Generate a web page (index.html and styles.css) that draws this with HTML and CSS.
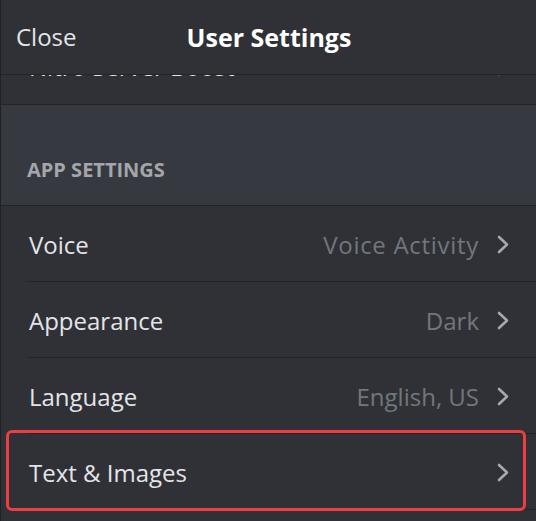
FILE: index.html
```html
<!DOCTYPE html>
<html lang="en">
<head>
<meta charset="utf-8">
<title>User Settings</title>
<link rel="stylesheet" href="styles.css">
</head>
<body>
<div class="screen">
  <header class="topbar">
    <span class="close">Close</span>
    <h1 class="title">User Settings</h1>
  </header>
  <div class="scroll">
    <div class="row row-full">
      <span class="label">Nitro Server Boost</span>
      <span class="trail">
        <svg class="chev" viewBox="0 0 12 19" width="12" height="19"><polyline points="2,2 10,9.5 2,17"/></svg>
      </span>
    </div>
    <div class="section-head">APP SETTINGS</div>
    <div class="group">
      <div class="row">
        <span class="label">Voice</span>
        <span class="trail"><span class="value value-wide">Voice Activity</span>
          <svg class="chev" viewBox="0 0 12 19" width="12" height="19"><polyline points="2,2 10,9.5 2,17"/></svg></span>
      </div>
      <div class="row">
        <span class="label">Appearance</span>
        <span class="trail"><span class="value">Dark</span>
          <svg class="chev" viewBox="0 0 12 19" width="12" height="19"><polyline points="2,2 10,9.5 2,17"/></svg></span>
      </div>
      <div class="row">
        <span class="label">Language</span>
        <span class="trail"><span class="value">English, US</span>
          <svg class="chev" viewBox="0 0 12 19" width="12" height="19"><polyline points="2,2 10,9.5 2,17"/></svg></span>
      </div>
      <div class="row row-highlight">
        <span class="label">Text &amp; Images</span>
        <span class="trail">
          <svg class="chev" viewBox="0 0 12 19" width="12" height="19"><polyline points="2,2 10,9.5 2,17"/></svg></span>
      </div>
    </div>
  </div>
</div>
</body>
</html>
```

FILE: styles.css
```css
* { box-sizing: border-box; }
html, body {
  margin: 0;
  padding: 0;
  background: #2f3136;
  height: 100%;
  overflow: hidden;
}
body {
  font-family: "Open Sans", "Noto Sans", sans-serif;
  color: #dcddde;
}
.screen {
  position: relative;
  height: 521px;
  border-left: 1px solid #1f2124;
  overflow: hidden;
}
.topbar {
  position: absolute;
  top: 0;
  left: 0;
  right: 0;
  height: 75px;
  background: #2f3136;
  border-bottom: 1px solid #222427;
  z-index: 2;
  display: flex;
  align-items: center;
  justify-content: center;
}
.close {
  position: absolute;
  left: 15px;
  top: 0;
  line-height: 74px;
  font-size: 24px;
  color: #e3e5e8;
}
.title {
  margin: 0;
  font-size: 25px;
  font-weight: 700;
  color: #ffffff;
  line-height: 74px;
  padding-left: 1px;
}
.scroll {
  padding-top: 29px;
}
.row {
  display: flex;
  align-items: center;
  justify-content: space-between;
  height: 76px;
  padding: 0 27px 0 28px;
  font-size: 24px;
  position: relative;
}
.row-full {
  border-bottom: 1px solid #222427;
}
.label { color: #e3e5e8; }
.trail {
  display: flex;
  align-items: center;
  gap: 18px;
}
.value { color: #72767d; }
.value-wide { letter-spacing: 0.7px; }
.chev {
  display: block;
  fill: none;
  stroke: #a5a8ad;
  stroke-width: 2.6;
  stroke-linecap: round;
  stroke-linejoin: round;
}
.section-head {
  background: #36393f;
  padding: 53px 26px 23px;
  font-size: 20px;
  line-height: 24px;
  font-weight: 700;
  color: #a3a6aa;
  border-bottom: 1px solid #222427;
}
.group .row::before {
  content: "";
  position: absolute;
  left: 26px;
  right: 0;
  bottom: 0;
  height: 1px;
  background: #222427;
}
.row-highlight::after {
  content: "";
  position: absolute;
  left: 5px;
  right: 10px;
  top: -4px;
  bottom: -1px;
  border: 3px solid #ef3e42;
  border-radius: 6px;
}
```
